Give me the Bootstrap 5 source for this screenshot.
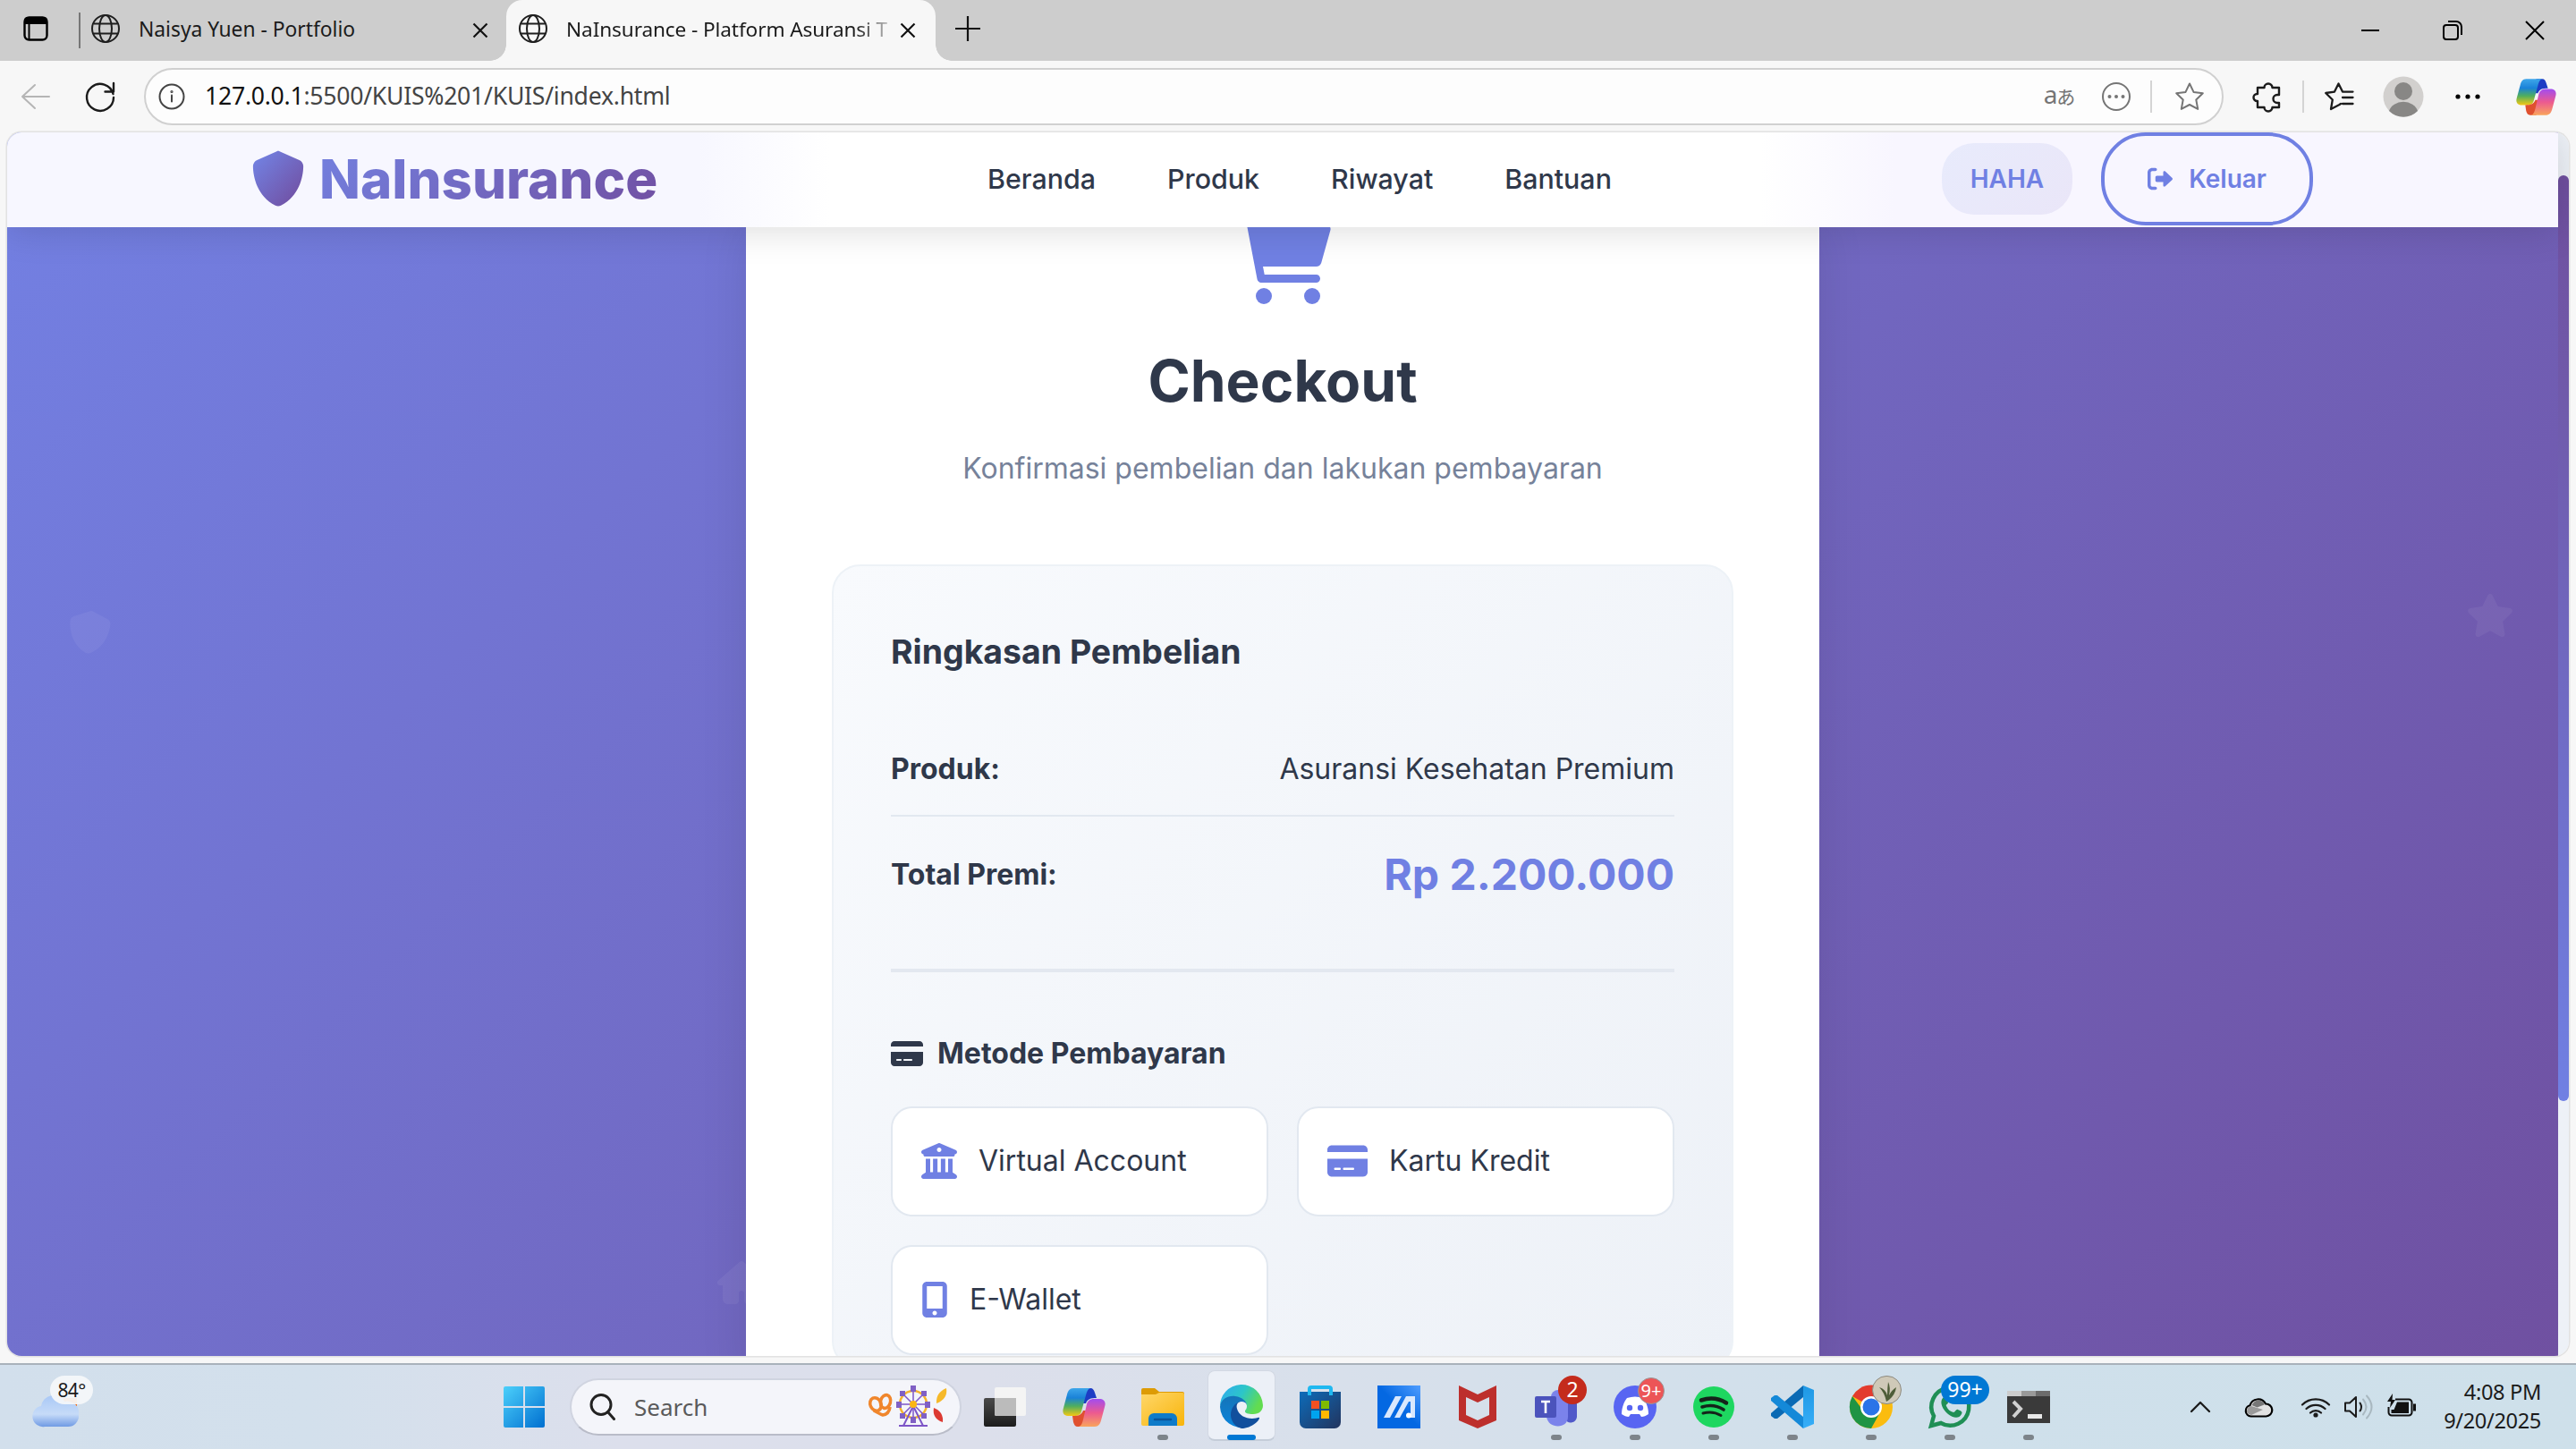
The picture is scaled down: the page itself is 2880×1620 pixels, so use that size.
<!DOCTYPE html>
<html lang="id">
<head>
<meta charset="utf-8">
<title>NaInsurance - Platform Asuransi Terpercaya</title>
<link href="https://cdn.jsdelivr.net/npm/bootstrap@5.3.0/dist/css/bootstrap.min.css" rel="stylesheet">
<style>
html,body{height:1620px;width:2880px;overflow:hidden}
body{background:#f7f7f7;font-family:"Noto Sans","Open Sans",sans-serif;color:#1b1b1b}
svg{display:block;flex:none;overflow:visible}
.ln{fill:none;stroke:currentColor;stroke-width:2;stroke-linecap:round;stroke-linejoin:round}
/* browser chrome */
.titlebar{height:68px;background:#cdcdcd;padding-left:26px}
.tab-name{font-size:22.8px;white-space:nowrap;line-height:34px;margin-left:21px;margin-right:auto;padding-bottom:3px}
.tab-sep{width:2px;height:40px;background:#777;margin:0 12px 0 34px}
.tab-idle{width:464px;padding-right:20px}
.tab-live{width:480px;height:68px;background:#f7f7f7;border-radius:18px 18px 0 0;padding:0 22px 0 14px;position:relative}
.tab-live:before,.tab-live:after{content:"";position:absolute;bottom:0;width:18px;height:18px}
.tab-live:before{left:-18px;background:radial-gradient(circle at 0 0,transparent 17.5px,#f7f7f7 18px)}
.tab-live:after{right:-18px;background:radial-gradient(circle at 100% 0,transparent 17.5px,#f7f7f7 18px)}
.tab-live .tab-name{font-size:22.6px;letter-spacing:-.1px;-webkit-mask-image:linear-gradient(90deg,#000 90%,transparent 104%);mask-image:linear-gradient(90deg,#000 90%,transparent 104%)}
.new-tab{margin:0 0 5px 22px}
.win-cell{width:92px}
.toolbar{height:80px;padding:0 4px}
.cell72{width:72px}.cell64{width:64px}.cell80{width:80px}
.v-sep{width:2px;height:36px;background:#d4d4d4;margin:0 6px}
.v-sep.slim{margin:0 3px}
.omnibox{height:64px;width:2325px;border:2px solid #d0d0d0;border-radius:32px;background:#fdfdfd;margin-left:13px;margin-right:13px;padding-left:14px;color:#757575}
.url{font-size:26.6px;color:#444;letter-spacing:-.25px;margin-left:22px}
.url b{font-weight:400;color:#111}
.cjk{font-family:"Noto Sans","Noto Sans CJK JP",sans-serif;font-size:28px;letter-spacing:-1px;line-height:34px;padding-bottom:4px}
.cjk small{font-size:21px}
/* page viewport */
.viewport{height:1368px;margin:0 8px;border-radius:16px;overflow:hidden;box-shadow:0 0 0 1.5px #e2e2e2}
.page{width:2852px;font-family:Inter,sans-serif;color:#2f384a;background:linear-gradient(135deg,#7381e4,#6f4c9b) 0 -63px/100% 1808px;position:relative}
.site-nav{height:106px;background:linear-gradient(90deg,#f7f7ff 0 770px,#fff 920px 1960px,#f8f6ff 2110px);box-shadow:0 4px 40px rgba(0,0,0,.14);position:relative;z-index:2}
.site-nav .inner{width:2304px;height:104px;margin:0 auto}
.brand{font-size:60px;font-weight:800;line-height:74px;background:linear-gradient(135deg,#7380df,#7150a2);-webkit-background-clip:text;background-clip:text;color:transparent;margin-left:16px}
.logo-mark{margin-left:-1px}
.menu{gap:80px;font-size:30.4px;font-weight:500;padding-top:1px}
.chip{height:80px;border-radius:36px;background:linear-gradient(135deg,#e8ebfc,#eae6f8);padding:0 32px;color:#7080e3;font-size:28px;font-weight:600}
.logout{height:104px;border:4px solid #7080e3;border-radius:50px;color:#7080e3;font-size:28px;font-weight:600;padding:0 48px;gap:18px;margin-left:32px}
.sheet{width:1200px;height:1290px;background:#fff;padding:0 96px;box-shadow:0 10px 50px rgba(0,0,0,.1)}
.cart{margin-top:-10px}
.sheet h1{font-size:64px;font-weight:700;line-height:80px;margin:46px 0 0}
.tagline{font-size:32px;line-height:48px;color:#76829a;margin:34px 0 83px}
.summary{width:1008px;height:900px;border:2px solid #edf2f7;border-radius:32px;background:linear-gradient(135deg,#f8fafd,#edf1f7);padding:64px}
.summary h2{font-size:37.44px;font-weight:700;line-height:63px;margin:0 0 48px}
.line-item{font-size:32px}
.line-item b{font-weight:700}
.item-a{height:105px;border-bottom:2px solid #e2e8f0}
.item-b{height:129px}
.price{font-size:48px;font-weight:700;color:#7080e3}
.rule{height:4px;background:#e3e8f0;margin-top:41px}
.method{font-size:32px;font-weight:700;line-height:48px;margin:67px 0 35px;gap:16px}
.pay-grid{display:grid;grid-template-columns:422px 422px;gap:32px}
.pay{height:123px;border:2px solid #e2e8f0;border-radius:24px;background:#fff;padding:0 32px 2px;gap:24px;font-size:32px}
.pay svg{color:#7080e3}
.drift{position:absolute;color:#fff;opacity:.055}
.track{width:12px;background:#edf1f7;padding-top:48px}
.thumb{height:1035px;border-radius:6px;background:linear-gradient(180deg,#6f4f9f 0%,#7059a9 22%,#7080e3 100%)}
/* taskbar */
.taskbar{margin-top:8px;height:96px;border-top:2px solid #a9b2bb;background:linear-gradient(90deg,#d2dfec 0,#d3e0ec 12%,#dcdfec 24%,#dcdfeb 38%,#d8e0eb 52%,#cfe0eb 75%,#cee0ea 100%);padding-left:36px}
.wx{width:506px}
.wx div{position:relative;width:72px;height:60px}
.wx span{position:absolute;left:20px;top:-5px;width:48px;height:32px;border-radius:16px;background:#f5f7faee;font-size:21px;line-height:32px;text-align:center;letter-spacing:-.7px}
.app{width:88px;height:94px;position:relative}
.app.run:after{content:"";position:absolute;left:38px;top:78px;width:12px;height:6px;border-radius:3px;background:#7d848a}
.app .tile{position:absolute;left:6px;top:6px;width:76px;height:79px;border-radius:8px;border:1px solid #d2d8e3;background:#ecf0f7;border-bottom:2px solid #c5cdd9}
.app.live svg{position:relative}
.app.live:after{left:28px;width:32px;background:#0078d4}
.bubble{position:absolute;top:12px;height:32px;border-radius:16px;color:#fff;font-size:23px;line-height:31px;text-align:center;z-index:1}
.on-teams{left:46px;width:32px;background:#c42b1c}
.on-discord{left:47px;top:14px;width:30px;height:30px;line-height:27px;font-size:20px;background:#ec5557;border:1px solid #999}
.on-chrome{left:45px;width:33px;background:#cfc9b8;border:1px solid #8d8a80}
.on-wa{left:34px;width:54px;background:#0078d4}
.finder{width:438px;height:64px;border-radius:32px;background:#f4f5fa;border:2px solid #d0d4e0;border-bottom-color:#b9bcc8;margin:0 5px 0 7px;padding:0 5px 0 19px;font-size:26px;color:#5a5a5a}
.finder span{margin-left:21px}
.clock{font-size:23.6px;line-height:32px;text-align:right;margin:0 39px 3px 30px;letter-spacing:-.35px}
</style>
<script src="https://cdn.jsdelivr.net/npm/bootstrap@5.3.0/dist/js/bootstrap.bundle.min.js"></script>
</head>
<body>
<svg width="0" height="0" class="position-absolute">
<defs>
<linearGradient id="gShield" x1="0" y1="0" x2="1" y2="1"><stop offset=".1" stop-color="#7280e0"/><stop offset=".9" stop-color="#7150a3"/></linearGradient>
<linearGradient id="gCopA" x1="0" y1="0" x2="0" y2="1"><stop stop-color="#3ea6ea"/><stop offset=".35" stop-color="#1a82d8"/><stop offset=".65" stop-color="#4fae5e"/><stop offset="1" stop-color="#f4c814"/></linearGradient>
<linearGradient id="gCopB" x1="0" y1="0" x2="0" y2="1"><stop stop-color="#a24cf0"/><stop offset=".5" stop-color="#ec5a90"/><stop offset="1" stop-color="#f9a45c"/></linearGradient>
<linearGradient id="gWin" gradientUnits="userSpaceOnUse" x1="0" y1="0" x2="46" y2="46"><stop stop-color="#4cd0fb"/><stop offset="1" stop-color="#006fd0"/></linearGradient>
<linearGradient id="gFold" x1="0" y1="0" x2="1" y2="1"><stop stop-color="#ffd76a"/><stop offset="1" stop-color="#f8b40a"/></linearGradient>
<linearGradient id="gEdgeA" x1="0" y1="0" x2="1" y2=".4"><stop stop-color="#2fa8f2"/><stop offset=".55" stop-color="#2cc6c8"/><stop offset="1" stop-color="#62dc50"/></linearGradient>
<linearGradient id="gEdgeB" x1="0" y1="0" x2="0" y2="1"><stop stop-color="#1574b8"/><stop offset="1" stop-color="#0a84dc"/></linearGradient>
<linearGradient id="gStore" x1="0" y1="0" x2="1" y2="1"><stop stop-color="#0d6cba"/><stop offset="1" stop-color="#22345e"/></linearGradient>
<linearGradient id="gAsus" x1="0" y1="1" x2="1" y2="0"><stop offset=".5" stop-color="#0468e2"/><stop offset="1" stop-color="#4f9dff"/></linearGradient>
<linearGradient id="gCloud" x1="0" y1="0" x2="0" y2="1"><stop stop-color="#a9c8f6"/><stop offset=".6" stop-color="#c6dbf8"/><stop offset="1" stop-color="#6f9ae4"/></linearGradient>
<linearGradient id="gDark" x1="0" y1="0" x2="0" y2="1"><stop stop-color="#4a4a4a"/><stop offset="1" stop-color="#1c1c1c"/></linearGradient>
<linearGradient id="gCode" x1="0" y1="0" x2="0" y2="1"><stop stop-color="#1f98e4"/><stop offset="1" stop-color="#36aef8"/></linearGradient>
<symbol id="globe" viewBox="0 0 32 32"><g fill="none" stroke="#1e1e1e" stroke-width="2"><circle cx="16" cy="16" r="15"/><ellipse cx="16" cy="16" rx="7" ry="15"/><path d="M2.500 10.500h27M2.500 21.500h27"/></g></symbol>
<symbol id="cross" viewBox="0 0 18 18"><path d="M1.500 1.500l15 15M16.500 1.500l-15 15" stroke="#111" stroke-width="2.200" fill="none"/></symbol>
<symbol id="copilot" viewBox="0 0 48 43"><path d="M24 0h7c3 0 4 2 5 5l2 6c-7 0-10 1-12 6l-4 0z" fill="#1d3cc4"/><path d="M12 0h19c-3 1-4 4-5 8l-5 18c-1 4-4 5-8 5H7c-5 0-8-3-6-9L5 7c1-4 3-7 7-7z" fill="url(#gCopA)"/><path d="M24 43h-7c-3 0-4-2-5-5l-1-7c7 0 10-1 12-6h4z" fill="#e0502f"/><path d="M36 43H18c3-1 4-4 5-8l4-17c1-4 4-6 8-6h6c5 0 8 3 6 9l-4 15c-1 4-3 7-7 7z" fill="url(#gCopB)"/></symbol>
<symbol id="card" viewBox="0 0 576 512"><path fill="currentColor" fill-rule="evenodd" d="M512 32C547.300 32 576 60.650 576 96V128H0V96C0 60.650 28.650 32 64 32H512zM576 416C576 451.300 547.300 480 512 480H64C28.650 480 0 451.300 0 416V224H576V416zM112 352C103.200 352 96 359.200 96 368C96 376.800 103.200 384 112 384H176C184.800 384 192 376.800 192 368C192 359.200 184.800 352 176 352H112zM240 384H368C376.800 384 384 376.800 384 368C384 359.200 376.800 352 368 352H240C231.200 352 224 359.200 224 368C224 376.800 231.200 384 240 384z"/></symbol>
<symbol id="star" viewBox="0 0 576 512"><path fill="currentColor" d="M381.200 150.300L524.900 171.500C536.800 173.200 546.800 181.600 550.600 193.100C554.400 204.700 551.300 217.300 542.700 225.900L438.500 328.100L463.100 474.700C465.100 486.700 460.200 498.900 450.200 506C440.300 513.100 427.200 514 416.500 508.300L288.100 439.800L159.800 508.300C149 514 135.900 513.100 126 506C116.100 498.900 111.100 486.700 113.200 474.700L137.800 328.100L33.580 225.900C24.970 217.300 21.910 204.700 25.690 193.100C29.460 181.600 39.430 173.200 51.420 171.500L195 150.300L259.400 17.970C264.700 6.995 275.800 0 288.100 0C300.400 0 311.600 6.995 316.900 17.970L381.200 150.300z"/></symbol>
<symbol id="house" viewBox="0 0 576 512"><path fill="currentColor" d="M575.800 255.500c0 18-15 32.100-32 32.100h-32l.7 160.200c0 36-28 64.200-63 64.200h-88c-22 0-40-17.900-40-40v-88c0-17.700-14.300-32-32-32h-2c-17.700 0-32 14.300-32 32v88c0 22.100-17.900 40-40 40h-88c-35 0-63-28-63-64V287.600H32c-18 0-32-14-32-32.100c0-9 3-17 10-24L266.400 8c7-7 15-8 22-8s15 2 21 7L564.800 231.500c8 7 12 15 11 24z"/></symbol>
</defs>
</svg>

<div class="titlebar d-flex align-items-center">
  <svg class="mb-1" width="28" height="28" viewBox="0 0 28 28"><rect x="1.500" y="1.500" width="25" height="25" rx="5" fill="none" stroke="#000" stroke-width="2.400"/><path d="M1 9V5a4 4 0 014-4h18a4 4 0 014 4v4z"/><path d="M6.500 9v17" stroke="#000" stroke-width="2"/></svg>
  <div class="tab-sep"></div>
  <div class="tab-idle d-flex align-items-center">
    <svg class="mb-1" width="32" height="32"><use href="#globe"/></svg>
    <div class="tab-name">Naisya Yuen - Portfolio</div>
    <svg width="18" height="18"><use href="#cross"/></svg>
  </div>
  <div class="tab-live d-flex align-items-center">
    <svg class="mb-1" width="32" height="32"><use href="#globe"/></svg>
    <div class="tab-name">NaInsurance - Platform Asuransi T</div>
    <svg width="18" height="18"><use href="#cross"/></svg>
  </div>
  <svg class="new-tab" width="28" height="28" viewBox="0 0 28 28"><path d="M14 0v28M0 14h28" stroke="#111" stroke-width="2.200"/></svg>
  <div class="d-flex ms-auto align-items-center">
    <div class="win-cell d-flex justify-content-center"><svg width="20" height="22"><path d="M0 11h20" stroke="#000" stroke-width="2"/></svg></div>
    <div class="win-cell d-flex justify-content-center"><svg width="22" height="22" viewBox="0 0 22 22" fill="none" stroke="#000" stroke-width="2"><rect x="1" y="5" width="16" height="16" rx="3"/><path d="M6 1h9a6 6 0 016 6v9"/></svg></div>
    <div class="win-cell d-flex justify-content-center"><svg width="22" height="22" viewBox="0 0 22 22"><path d="M1 1l20 20M21 1L1 21" stroke="#000" stroke-width="2"/></svg></div>
  </div>
</div>

<div class="toolbar d-flex align-items-center">
  <div class="cell72 d-flex justify-content-center"><svg class="ln" style="color:#b5b5b5" width="32" height="28"><path d="M31 14H1M15 1L1 14l14 13"/></svg></div>
  <div class="cell72 d-flex justify-content-center"><svg class="ln" width="32" height="32"><path d="M30.500 13A15 15 0 1031 17M31 1v9.500h-9.500" stroke-width="2.400"/></svg></div>
  <div class="omnibox d-flex align-items-center">
    <svg class="ln" style="color:#444" width="30" height="30"><circle cx="15" cy="15" r="13.500"/><path d="M15 13.500v7"/><circle cx="15" cy="9.500" r=".6"/></svg>
    <div class="url"><b>127.0.0.1</b>:5500/KUIS%201/KUIS/index.html</div>
    <div class="cell64 ms-auto text-center cjk">a<small>あ</small></div>
    <div class="cell64 d-flex justify-content-center"><svg class="ln" width="32" height="32"><circle cx="16" cy="16" r="15"/><g fill="currentColor" stroke="none"><circle cx="8.500" cy="16" r="2"/><circle cx="16" cy="16" r="2"/><circle cx="23.500" cy="16" r="2"/></g></svg></div>
    <div class="v-sep"></div>
    <div class="cell72 d-flex justify-content-center"><svg class="ln" width="32" height="32"><path d="M16 1.500l4.500 9.400 10.300 1.400-7.500 7.200 1.900 10.400L16 25l-9.200 4.900 1.900-10.400-7.500-7.200 10.300-1.400z"/></svg></div>
  </div>
  <div class="cell72 d-flex justify-content-center"><svg class="ln" width="30" height="32"><path d="M4 6h7.500a4.500 4.500 0 119 0H28v8h-2a4 4 0 000 9h2v5h-7.500a4.500 4.500 0 11-9 0H4v-7H3.500a4 4 0 010-8H4z" stroke-width="2.400"/></svg></div>
  <div class="v-sep slim"></div>
  <div class="cell72 d-flex justify-content-center"><svg class="ln" width="32" height="32"><path d="M18 24l-1.500 1L7 30l1.800-10.500L1.200 12l9.800-1.400L15.500 1.500l4.500 9.100h11.500M20 17h11.500M20 24h11.500" stroke-width="2.300"/></svg></div>
  <div class="cell72 d-flex justify-content-center"><svg width="46" height="46"><circle cx="23" cy="23" r="22.500" fill="#d2d0ce"/><circle cx="23" cy="17" r="10" fill="#888785"/><path d="M7 39a16.500 13.500 0 0132 0 22.500 22.500 0 01-32 0z" fill="#888785"/></svg></div>
  <div class="cell72 d-flex justify-content-center"><svg width="28" height="6"><circle cx="3" cy="3" r="2.600"/><circle cx="14" cy="3" r="2.600"/><circle cx="25" cy="3" r="2.600"/></svg></div>
  <div class="cell80 d-flex justify-content-center"><svg width="45" height="41"><use href="#copilot"/></svg></div>
</div>

<div class="viewport d-flex">
  <div class="page">
    <header class="site-nav">
      <div class="inner d-flex align-items-center justify-content-between">
        <div class="d-flex align-items-center">
          <svg class="logo-mark" width="60" height="62" viewBox="0 0 512 512" preserveAspectRatio="none" fill="url(#gShield)"><path d="M256-1.100c4.600 0 9.200 1 13.400 2.900L457.700 81.700c22 9.300 38.400 31 38.300 57.200c-.5 99.200-41.300 280.700-213.600 363.200c-16.700 8-36.100 8-52.800 0C57.300 419.600 16.500 238.100 16 138.900c-.1-26.200 16.300-47.900 38.300-57.200L242.700 1.800C246.800-.1 251.400-1.100 256-1.100z"/></svg>
          <div class="brand">NaInsurance</div>
        </div>
        <nav class="menu d-flex"><span>Beranda</span><span>Produk</span><span>Riwayat</span><span>Bantuan</span></nav>
        <div class="d-flex align-items-center">
          <div class="chip d-flex align-items-center">HAHA</div>
          <div class="logout d-flex align-items-center">
            <svg width="28" height="28" viewBox="0 0 512 512" fill="currentColor"><path d="M96 480h64C177.700 480 192 465.700 192 448S177.700 416 160 416H96c-17.670 0-32-14.330-32-32V128c0-17.670 14.330-32 32-32h64C177.700 96 192 81.670 192 64S177.700 32 160 32H96C42.980 32 0 74.980 0 128v256C0 437 42.980 480 96 480zM504.800 238.500l-144.100-136c-6.975-6.578-17.200-8.375-26-4.594c-8.803 3.797-14.510 12.470-14.510 22.050l-.0918 72l-128-.001c-17.690 0-32.020 14.330-32.020 32v64c0 17.670 14.340 32 32.020 32l128 .001l.0918 71.100c0 9.578 5.707 18.250 14.510 22.050c8.803 3.781 19.030 1.984 26-4.594l144.100-136C514.400 264.400 514.400 247.600 504.800 238.500z"/></svg>
            <span>Keluar</span>
          </div>
        </div>
      </div>
    </header>
    <svg class="drift" style="left:67px;top:535px" width="50" height="48" viewBox="0 0 512 512" fill="#fff"><path transform="rotate(5 256 256)" d="M256-1.100c4.600 0 9.200 1 13.400 2.900L457.700 81.700c22 9.300 38.400 31 38.300 57.200c-.5 99.200-41.300 280.700-213.600 363.200c-16.700 8-36.100 8-52.800 0C57.300 419.600 16.500 238.100 16 138.900c-.1-26.200 16.300-47.900 38.300-57.200L242.700 1.800C246.800-.1 251.400-1.100 256-1.100z"/></svg>
    <svg class="drift" style="left:2749px;top:516px" width="54" height="48"><use href="#star"/></svg>
    <svg class="drift" style="left:794px;top:1262px" width="54" height="48"><use href="#house"/></svg>
    <main class="sheet mx-auto position-relative text-center">
      <svg class="cart mx-auto" width="108" height="96" viewBox="0 0 576 512" fill="#7080e3"><path d="M96 0C107.500 0 117.400 8.190 119.600 19.510L121.100 32H541.800C562.100 32 578.300 52.250 572.600 72.660L518.600 264.700C514.700 278.500 502.100 288 487.800 288H170.700L179.900 336H488C501.300 336 512 346.700 512 360C512 373.300 501.300 384 488 384H159.100C148.500 384 138.600 375.800 136.400 364.500L76.140 48H24C10.750 48 0 37.250 0 24C0 10.750 10.750 0 24 0H96z"/><circle cx="176" cy="464" r="48"/><circle cx="464" cy="464" r="48"/></svg>
      <h1>Checkout</h1>
      <p class="tagline">Konfirmasi pembelian dan lakukan pembayaran</p>
      <section class="summary text-start">
        <h2>Ringkasan Pembelian</h2>
        <div class="line-item item-a d-flex justify-content-between align-items-center"><b>Produk:</b><span>Asuransi Kesehatan Premium</span></div>
        <div class="line-item item-b d-flex justify-content-between align-items-center"><b>Total Premi:</b><span class="price">Rp 2.200.000</span></div>
        <div class="rule"></div>
        <div class="method d-flex align-items-center"><svg width="36" height="32"><use href="#card"/></svg>Metode Pembayaran</div>
        <div class="pay-grid">
          <div class="pay d-flex align-items-center"><svg width="40" height="40" viewBox="0 0 512 512" fill="currentColor"><path fill-rule="evenodd" d="M243.400 2.587C251.400-.8625 260.600-.8625 268.600 2.587L492.600 98.590C506.600 104.600 514.400 119.600 511.300 134.400C508.300 149.300 495.200 159.100 479.100 160V168C479.100 181.300 469.300 192 455.100 192H55.100C42.740 192 31.100 181.300 31.100 168V160C16.810 159.100 3.708 149.300 .6528 134.400C-2.402 119.600 5.429 104.600 19.390 98.590L243.400 2.587zM256 128C273.700 128 288 113.700 288 96C288 78.330 273.700 64 256 64C238.300 64 224 78.330 224 96C224 113.700 238.300 128 256 128zM128 416H168V224H232V416H280V224H344V416H384V224H448V420.300L492 448C505 456 512 468 512 480C512 498 498 512 480 512H32C14 512 0 498 0 480C0 468 7 456 20 448L64 420.300V224H128V416z"/></svg>Virtual Account</div>
          <div class="pay d-flex align-items-center"><svg width="45" height="40"><use href="#card"/></svg>Kartu Kredit</div>
          <div class="pay d-flex align-items-center"><svg width="30" height="40" viewBox="0 0 384 512" fill="currentColor"><path fill-rule="evenodd" d="M304 0h-224c-35.350 0-64 28.650-64 64v384c0 35.350 28.650 64 64 64h224c35.350 0 64-28.650 64-64V64C368 28.650 339.300 0 304 0zM192 480c-17.750 0-32-14.250-32-32s14.250-32 32-32s32 14.250 32 32S209.800 480 192 480zM304 64v320h-224V64H304z"/></svg>E-Wallet</div>
        </div>
      </section>
    </main>
  </div>
  <div class="track"><div class="thumb"></div></div>
</div>

<div class="taskbar d-flex align-items-center">
  <div class="wx"><div>
    <svg width="56" height="60" viewBox="0 0 56 60"><path d="M34 20h16v9l-10 4z" fill="#f76a0c"/><path d="M14 52A11.500 11.500 0 0110 29 14 14 0 0136 24 13 13 0 0152 39 12 12 0 0140 52z" fill="url(#gCloud)"/></svg>
    <span>84°</span></div></div>
  <div class="app d-flex align-items-center justify-content-center"><svg width="46" height="46" fill="url(#gWin)"><path d="M2 0h20v22H0V2a2 2 0 012-2zM24 0h20a2 2 0 012 2v20H24zM0 24h22v22H2a2 2 0 01-2-2zM24 24h22v20a2 2 0 01-2 2H24z"/></svg></div>
  <div class="finder d-flex align-items-center">
    <svg width="30" height="30" fill="none" stroke="#222" stroke-width="3"><circle cx="14" cy="12.500" r="11"/><path d="M21.500 20.500l7 8" stroke-linecap="round"/></svg>
    <span>Search</span>
    <svg class="ms-auto" width="98" height="46" viewBox="0 0 98 46">
      <g fill="none" stroke="#f0862c" stroke-width="3.600"><ellipse cx="9" cy="20" rx="6" ry="7.500" transform="rotate(-25 9 20)"/><ellipse cx="20" cy="17" rx="5.500" ry="7.500" transform="rotate(15 20 17)"/><path d="M7 27q7 4 10 5 7-1 8-9"/></g>
      <g transform="translate(51 20)"><circle r="15" fill="none" stroke="#f5b32e" stroke-width="2.500"/><g stroke="#7d55c7" stroke-width="1.500"><path d="M-17 0H17M0-18V18M-12-12L12 12M12-12L-12 12"/><path d="M0 2L-11 24M0 2L11 24M-16 24H16" stroke-width="2"/></g><circle r="4" fill="#fbb614"/><g fill="#8060c4"><rect x="-3" y="-21" width="6" height="7"/><rect x="-3" y="14" width="6" height="7"/><rect x="-19" y="-3" width="6" height="7"/><rect x="13" y="-3" width="6" height="7"/><rect x="-15" y="-15" width="6" height="6"/><rect x="9" y="-15" width="6" height="6"/><rect x="-15" y="10" width="6" height="6"/><rect x="9" y="10" width="6" height="6"/></g></g>
      <path d="M77 19q-1-12 11-17 2 12-11 17z" fill="#f6b92a"/><path d="M84 40q-12-4-10-16 11 4 10 16z" fill="#dc3a32"/></svg>
  </div>
  <div class="app d-flex align-items-center justify-content-center"><svg width="48" height="44"><rect y="12" width="36" height="32" rx="2" fill="url(#gDark)"/><rect x="12" width="35" height="32" rx="2" fill="#f4f4f4"/><path d="M12 12h24v20H14a2 2 0 01-2-2z" fill="#bbb"/></svg></div>
  <div class="app d-flex align-items-center justify-content-center"><svg width="48" height="43"><use href="#copilot"/></svg></div>
  <div class="app run d-flex align-items-center justify-content-center"><svg width="48" height="42"><path d="M2 0h13l5 4h26a2 2 0 012 2v8H0V2a2 2 0 012-2z" fill="#dd9b05"/><path d="M0 7h16l4-2h26a2 2 0 012 2v33a2 2 0 01-2 2H2a2 2 0 01-2-2z" fill="url(#gFold)"/><path d="M8 42V34a6 6 0 016-6h20a6 6 0 016 6v8z" fill="#0f7bc9"/><path d="M15 35h18" stroke="#0a559a" stroke-width="2.500" stroke-linecap="round"/></svg></div>
  <div class="app run live d-flex align-items-center justify-content-center"><div class="tile"></div><svg width="48" height="48"><path d="M0 24A24 24 0 0148 22c0 6-4 10-11 10-6 0-9-1-9-3 0-2 2-2 2-6 0-5-5-9-12-9C8 14 1 19 0 24z" fill="url(#gEdgeA)"/><path d="M0 24C1 15 9 11 17 12c8 1 13 6 13 10-1-3-3-4-6-4-5 0-9 5-8 11 1 8 7 14 15 17A24 24 0 010 24z" fill="url(#gEdgeB)"/><path d="M23 18c-4 1-5 4-4 8 2 7 9 11 17 11 4 0 7-2 8-1 1 2-8 12-20 12-8-2-12-9-12-15 0-8 5-14 11-15z" fill="#114f9d"/></svg></div>
  <div class="app d-flex align-items-center justify-content-center"><svg width="46" height="48"><path d="M0 7h46v34a7 7 0 01-7 7H7a7 7 0 01-7-7z" fill="url(#gStore)"/><path d="M11 11V4a2 2 0 012-2h20a2 2 0 012 2v7" fill="none" stroke="#1fb8f0" stroke-width="4"/><path d="M13 17h9v9h-9z" fill="#f25022"/><path d="M24 17h9v9h-9z" fill="#7fba00"/><path d="M13 28h9v9h-9z" fill="#00a4ef"/><path d="M24 28h9v9h-9z" fill="#ffb900"/></svg></div>
  <div class="app d-flex align-items-center justify-content-center"><svg width="48" height="48"><path fill="url(#gAsus)" d="M0 0h48v48H0z"/><path d="M7 36L20 12h7L14 36zM19 36L32 12h10v24h-5V18h-2L25 36z" fill="#d9e8fd"/><circle cx="35" cy="33.500" r="3" fill="#fff"/></svg></div>
  <div class="app d-flex align-items-center justify-content-center"><svg width="42" height="48"><path fill="#bd2f2c" fill-rule="evenodd" d="M0 0l21 10L42 0v39l-21 9-21-9zM8 13v20l13 6 13-6V13l-13 6z"/></svg></div>
  <div class="app run d-flex align-items-center justify-content-center"><svg width="48" height="42"><circle cx="26" cy="10" r="8" fill="#7b83eb"/><path d="M34 15h13v17a7 7 0 01-13 3z" fill="#5059c9"/><path d="M13 15h24v17c0 14-22 14-24 0z" fill="#7b83eb"/><rect y="9" width="24" height="24" rx="2" fill="#4b53bc"/><path d="M7 15h10M12 15v13" stroke="#fff" stroke-width="2.600"/></svg><div class="bubble on-teams">2</div></div>
  <div class="app run d-flex align-items-center justify-content-center"><svg width="48" height="48"><circle cx="24" cy="24" r="24" fill="#5865f2"/><path d="M15 14q9-3 18 0c4 5 6 12 6 18-3 2-5 3-8 3l-2-3h-10l-2 3c-3 0-5-1-8-3 0-6 2-13 6-18z" fill="#fff"/><circle cx="18" cy="25" r="3.200" fill="#5865f2"/><circle cx="30" cy="25" r="3.200" fill="#5865f2"/></svg><div class="bubble on-discord">9+</div></div>
  <div class="app run d-flex align-items-center justify-content-center"><svg width="46" height="46"><circle cx="23" cy="23" r="23" fill="#1ed760"/><g fill="none" stroke="#14231a" stroke-linecap="round"><path d="M9 15.500q15-5 28 3" stroke-width="4.500"/><path d="M10 23q13-4 24 3" stroke-width="3.600"/><path d="M11 30q11-3 20 2.500" stroke-width="3"/></g></svg></div>
  <div class="app run d-flex align-items-center justify-content-center"><svg width="48" height="48"><path d="M36 0L0 31l0 3 4 3h3L36 13z" fill="#0a6ab4"/><path d="M36 48L0 17v-3l4-3h3L36 35z" fill="#1489d8"/><path d="M36 0l12 5v38l-12 5z" fill="url(#gCode)"/></svg></div>
  <div class="app run d-flex align-items-center justify-content-center"><svg width="48" height="48"><circle cx="24" cy="24" r="24" fill="#fbbc0f"/><path d="M24 24L3 12A24 24 0 0145 12z" fill="#e33b2e"/><path d="M24 24H12L3 12a24 24 0 0021 36l10-18z" fill="#1f9444"/><circle cx="24" cy="24" r="12" fill="#fff"/><circle cx="24" cy="24" r="9.500" fill="#2b74e8"/></svg><div class="bubble on-chrome"><svg width="31" height="30"><path d="M15 28q-2-10-8-16 7 2 9 9 0-8 1-15 3 6 1 15 3-6 8-9-1 8-8 14z" fill="#4e5d38"/></svg></div></div>
  <div class="app run d-flex align-items-center justify-content-center"><svg width="48" height="48"><path d="M3 45l3-11A21 21 0 1114 42z" fill="none" stroke="#1f8f55" stroke-width="4.500"/><path d="M16 14c3-2 4 0 6 5 0 2-3 2-2 4 2 4 4 6 8 7 2 0 3-4 5-3 5 2 5 3 4 5-3 6-10 4-15 0-6-5-10-13-6-18z" fill="#1f8f55"/></svg><div class="bubble on-wa">99+</div></div>
  <div class="app run d-flex align-items-center justify-content-center"><svg width="48" height="36"><path d="M0 0h48v36H0z" fill="#3a3a3a"/><path d="M0 0h16v6H0z" fill="#ccc"/><path d="M16 0h16v6H16z" fill="#999"/><path d="M32 0h16v6H32z" fill="#6c6c6c"/><path d="M7 12l8 8-8 9" fill="none" stroke="#d0d0d0" stroke-width="4"/><path d="M23 26h16v5H23z" fill="#e8e8e8"/></svg></div>
  <div class="d-flex align-items-center ms-auto">
    <svg width="22" height="12" class="ln"><path d="M1 11L11 1l10 10" stroke-width="2.300"/></svg>
    <svg style="margin-left:38px" width="32" height="23" viewBox="0 0 32 23"><path d="M7.500 21.500a6.200 6.200 0 01-1-12.200A9.500 9.500 0 0124 7.500a7 7 0 01.5 14z" fill="#e2e2e2" stroke="#000" stroke-width="2.200"/><path d="M3 17q0-6 5-7L21 14 8 20q-3 0-5-3z" fill="#9a9a9a"/><path d="M8.500 9q4-7 9-5.500t5 5l-8 3z" fill="#777"/></svg>
    <svg style="margin-left:32px" width="32" height="24" class="ln"><g stroke-width="2.300"><path d="M1 9.500a21.500 21.500 0 0130 0M5.500 14a15.500 15.500 0 0121 0M10 18.500a9 9 0 0112 0"/></g><circle cx="16" cy="21" r="2.600" fill="currentColor" stroke="none"/></svg>
    <svg style="margin-left:16px" width="33" height="28" class="ln"><path d="M1 9.500h5l7-6.500v22l-7-6.500H1zM17.500 9.500q3 4.500 0 9"/><path d="M21 5.500q7 8.500 0 17M25 1.500q11 12.500 0 25" stroke="#a9b8c0"/></svg>
    <svg class="mb-1" style="margin-left:15px" width="33" height="26" viewBox="0 0 33 26"><path d="M9 6.500h15a3.500 3.500 0 013.500 3.500v11a3.500 3.500 0 01-3.500 3.500H5A3.500 3.500 0 011.500 21v-6" fill="none" stroke="#111" stroke-width="2"/><path d="M11 9.500h13v12.500H4.500V18h3z" fill="#111"/><path d="M29 11.500h3v8h-3zM6 0L0 9h4l-1 7 6-9H5.500z" fill="#111"/></svg>
    <div class="clock">4:08 PM<br>9/20/2025</div>
  </div>
</div>
</body>
</html>
